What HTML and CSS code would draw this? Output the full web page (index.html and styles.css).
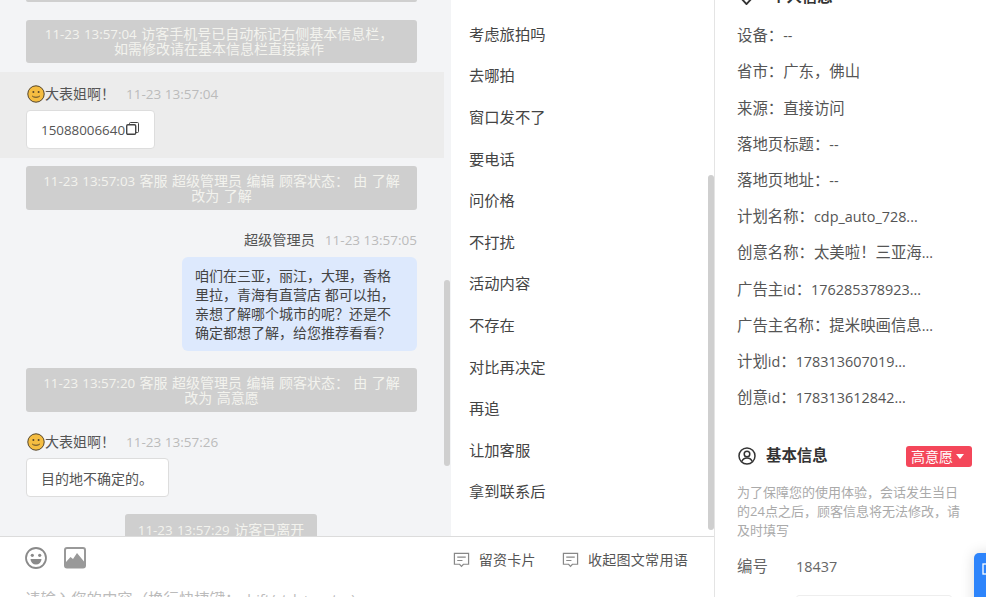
FILE: index.html
```html
<!DOCTYPE html>
<html lang="zh">
<head>
<meta charset="utf-8">
<title>会话</title>
<link rel="stylesheet" href="styles.css">
</head>
<body>
<div class="app">
  <div class="main">
    <div class="panes">
      <section class="chat">
        <div class="notice notice-clip"></div>
        <div class="notice n1"><span class="lat">11-23 13:57:04</span> 访客手机号已自动标记右侧基本信息栏，<br>如需修改请在基本信息栏直接操作</div>
        <div class="msg msg-hi">
          <div class="meta">
            <svg class="avatar" viewBox="0 0 18 18"><circle cx="9" cy="9" r="8.2" fill="#f5bd41" stroke="#55452a" stroke-width="1"/><circle cx="6.4" cy="7" r="1" fill="#55452a"/><circle cx="11.6" cy="7" r="1" fill="#55452a"/><path d="M5.2 11c1.1 1.7 6.4 1.7 7.6 0" fill="none" stroke="#55452a" stroke-width="1"/></svg>
            <span class="name">大表姐啊！</span><span class="time lat">11-23 13:57:04</span>
          </div>
          <div class="bubble phone"><span class="lat">15088006640</span><svg class="copy" viewBox="0 0 13 13"><rect x="0.7" y="2.7" width="9" height="9.6" rx="1.2" fill="none" stroke="#444" stroke-width="1.4"/><path d="M3.5 2.7V1.5a1 1 0 0 1 1-1h7a1 1 0 0 1 1 1v8a1 1 0 0 1-1 1H9.7" fill="none" stroke="#444" stroke-width="1"/></svg></div>
        </div>
        <div class="notice n2"><span class="lat">11-23 13:57:03</span> 客服 超级管理员 编辑 顾客状态： 由 了解<br>改为 了解</div>
        <div class="meta meta-right"><span class="name">超级管理员</span><span class="time lat">11-23 13:57:05</span></div>
        <div class="bubble-own">咱们在三亚，丽江，大理，香格里拉，青海有直营店 都可以拍，亲想了解哪个城市的呢？还是不确定都想了解，给您推荐看看？</div>
        <div class="notice n3"><span class="lat">11-23 13:57:20</span> 客服 超级管理员 编辑 顾客状态： 由 了解<br>改为 高意愿</div>
        <div class="meta meta-left">
          <svg class="avatar" viewBox="0 0 18 18"><circle cx="9" cy="9" r="8.2" fill="#f5bd41" stroke="#55452a" stroke-width="1"/><circle cx="6.4" cy="7" r="1" fill="#55452a"/><circle cx="11.6" cy="7" r="1" fill="#55452a"/><path d="M5.2 11c1.1 1.7 6.4 1.7 7.6 0" fill="none" stroke="#55452a" stroke-width="1"/></svg>
          <span class="name">大表姐啊！</span><span class="time lat">11-23 13:57:26</span>
        </div>
        <div class="bubble bubble-text">目的地不确定的。</div>
        <div class="notice n4"><span class="lat">11-23 13:57:29</span> 访客已离开</div>
        <div class="thumb thumb-chat"></div>
      </section>
      <section class="phrases">
        <ul class="phrase-list">
          <li>考虑旅拍吗</li>
          <li>去哪拍</li>
          <li>窗口发不了</li>
          <li>要电话</li>
          <li>问价格</li>
          <li>不打扰</li>
          <li>活动内容</li>
          <li>不存在</li>
          <li>对比再决定</li>
          <li>再追</li>
          <li>让加客服</li>
          <li>拿到联系后</li>
        </ul>
        <div class="thumb thumb-phrases"></div>
      </section>
    </div>
    <div class="composer">
      <div class="toolbar">
        <svg class="tool" viewBox="0 0 22 22"><circle cx="11" cy="11" r="10" fill="none" stroke="#8a8a8a" stroke-width="1.8"/><circle cx="7.3" cy="8.3" r="1.6" fill="#8a8a8a"/><circle cx="14.7" cy="8.3" r="1.6" fill="#8a8a8a"/><path d="M5.5 12h11a5.5 5.5 0 0 1-11 0z" fill="#8a8a8a"/></svg>
        <svg class="tool tool-img" viewBox="0 0 22 22"><rect x="1" y="1" width="20" height="19.5" rx="2" fill="#fff" stroke="#999" stroke-width="2"/><path d="M2 15l4.5-5 2.5 2 4-6 7 8.500V20H2z" fill="#999"/></svg>
        <div class="actions">
          <span class="action"><svg class="bubble-icon" viewBox="0 0 18 16"><path d="M1.5 1h15v11.5h-5.5L9 14.8 7 12.5H1.5z" fill="none" stroke="#888" stroke-width="1.3"/><path d="M4.5 5h9M4.5 8.5h5.5" stroke="#888" stroke-width="1.2"/></svg>留资卡片</span>
          <span class="action"><svg class="bubble-icon" viewBox="0 0 18 16"><path d="M1.5 1h15v11.5h-5.5L9 14.8 7 12.5H1.5z" fill="none" stroke="#888" stroke-width="1.3"/><path d="M4.5 5h9M4.5 8.5h5.5" stroke="#888" stroke-width="1.2"/></svg>收起图文常用语</span>
        </div>
      </div>
      <div class="placeholder">请输入您的内容（换行快捷键：<span class="lat">shift/ctrl + enter)</span></div>
    </div>
  </div>
  <aside class="aside">
    <h3 class="aside-title aside-title-top"><svg class="pin" viewBox="0 0 16 16"><path d="M8 15L2 8.5a4 4 0 0 1 12 0z" fill="none" stroke="#333" stroke-width="2"/></svg>个人信息</h3>
    <dl class="info">
      <div>设备：<span class="lat">--</span></div>
      <div>省市：广东，佛山</div>
      <div>来源：直接访问</div>
      <div>落地页标题：<span class="lat">--</span></div>
      <div>落地页地址：<span class="lat">--</span></div>
      <div>计划名称：<span class="lat">cdp_auto_728...</span></div>
      <div>创意名称：太美啦！三亚海<span class="lat">...</span></div>
      <div>广告主<span class="lat">id</span>：<span class="lat">176285378923...</span></div>
      <div>广告主名称：提米映画信息<span class="lat">...</span></div>
      <div>计划<span class="lat">id</span>：<span class="lat">178313607019...</span></div>
      <div>创意<span class="lat">id</span>：<span class="lat">178313612842...</span></div>
    </dl>
    <div class="basic-head">
      <svg class="user" viewBox="0 0 18 18"><circle cx="9" cy="9" r="8" fill="none" stroke="#333" stroke-width="1.5"/><circle cx="9" cy="7" r="2.8" fill="none" stroke="#333" stroke-width="1.5"/><path d="M3.8 14.5c1-2.6 3-3.5 5.2-3.5s4.2.9 5.200 3.500" fill="none" stroke="#333" stroke-width="1.5"/></svg>
      <h3 class="aside-title">基本信息</h3>
      <span class="badge">高意愿<i class="caret"></i></span>
    </div>
    <p class="hint">为了保障您的使用体验，会话发生当日的<span class="lat">24</span>点之后，顾客信息将无法修改，请及时填写</p>
    <div class="field"><span class="field-label">编号</span><span class="lat">18437</span></div>
    <div class="field-input"></div>
    <div class="float-btn"><svg viewBox="0 0 12 12" class="float-icon"><rect x="1" y="1" width="11" height="10" fill="none" stroke="#fff" stroke-width="1.3"/></svg></div>
  </aside>
</div>
</body>
</html>
```

FILE: styles.css
```css
* { box-sizing: border-box; }
html, body { margin: 0; height: 100%; overflow: hidden; background: #fff; }
body { font-family: "Open Sans", "Noto Sans CJK SC", sans-serif; font-size: 14px; color: #555; text-spacing-trim: space-all; }
.lat { font-size: .955em; }
.app { display: flex; width: 986px; height: 597px; overflow: hidden; }
.main { width: 714px; display: flex; flex-direction: column; flex: none; }
.panes { display: flex; height: 537px; border-bottom: 1px solid #dcdcdc; flex: none; }

.chat { position: relative; width: 451px; padding-right: 7px; background: #f3f4f6; overflow: hidden; flex: none; }
.notice { margin: 0 27px 0 26px; background: #cfcfcf; border-radius: 3px; color: #f3f3ee; text-align: center; font-size: 14px; line-height: 14.5px; padding: 7px 4px; word-spacing: .8px; }
.notice-clip { height: 2px; padding: 0; border-radius: 0 0 3px 3px; }
.n1 { margin-top: 18px; height: 43px; padding-right: 7px; padding-left: 2px; }
.n2 { margin-top: 8px; height: 44px; padding-top: 8px; }
.n3 { margin-top: 17px; height: 44px; padding-top: 8px; }
.n4 { margin: 17px 0 0 125px; width: 192px; height: 30px; padding-top: 8px; line-height: 16px; }

.msg-hi { margin-top: 9px; height: 86px; padding: 13px 26px 0; background: #ececec; }
.meta { display: flex; align-items: center; height: 18px; line-height: 18px; }
.meta-right { justify-content: flex-end; margin: 21px 27px 0 0; }
.meta-left { margin: 21px 0 0 26px; }
.avatar { width: 18px; height: 18px; margin-left: 1px; flex: none; }
.name { color: #555; }
.time { margin-left: 11px; color: #bbb; font-size: 13.5px; }
.meta-right .time { margin-left: 10px; }
.meta-right .name { font-size: 14.2px; }
.bubble { display: inline-flex; align-items: center; height: 39px; margin-top: 7px; padding: 0 15px 0 14px; background: #fff; border: 1px solid #ddd; border-radius: 4px; color: #555; }
.phone { width: 129px; padding-right: 0; }
.copy { width: 13px; height: 13px; margin: -3px 0 0 1px; flex: none; }
.bubble-text { display: flex; width: 143px; margin: 7px 0 0 26px; white-space: nowrap; }
.bubble-own { width: 235px; height: 94px; margin: 8px 0 0 182px; padding: 9px 13px; background: #dde9fd; border-radius: 6px; color: #444; line-height: 19px; }
.thumb { position: absolute; right: 0; width: 6px; background: #cfcfcf; border-radius: 3px; }
.thumb-chat { top: 280px; height: 186px; right: 1px; }

.phrases { position: relative; flex: 1; background: #fff; overflow: hidden; }
.phrase-list { list-style: none; margin: 0; padding: 13.8px 0 0 18px; color: #444; font-size: 15.3px; }
.phrase-list li { height: 41.6px; line-height: 41.6px; }
.thumb-phrases { top: 175px; height: 355px; }

.composer { flex: 1; position: relative; overflow: hidden; background: #fff; padding: 10px 26px 0 25px; }
.toolbar { display: flex; align-items: flex-start; }
.tool { width: 22px; height: 22px; flex: none; }
.tool-img { margin-left: 17px; }
.actions { margin-left: auto; display: flex; gap: 26px; padding-top: 3px; color: #555; line-height: 20px; }
.action { display: flex; align-items: center; letter-spacing: .3px; }
.bubble-icon { width: 17px; height: 16px; margin-right: 9px; flex: none; }
.placeholder { margin-top: 20px; color: #bbb; font-size: 15.4px; line-height: 20px; white-space: nowrap; word-spacing: 1.5px; }
.placeholder .lat { font-size: 14.4px; }

.aside { position: relative; flex: 1; border-left: 1px solid #e4e4e4; padding: 0 14px 0 22px; overflow: hidden; background: #fff; font-size: 15.4px; }
.aside .lat { font-size: 14.4px; }
.aside-title { margin: 0; font-size: 15.4px; font-weight: 700; color: #333; line-height: 20px; }
.aside-title-top { display: flex; align-items: center; margin-top: -13px; gap: 17px; height: 20px; padding-left: 2px; }
.pin { width: 15px; height: 15px; flex: none; }
.info { margin: 0; padding-top: 11.3px; color: #555; }
.info div { height: 36.2px; line-height: 36.2px; white-space: nowrap; }
.basic-head { display: flex; align-items: center; height: 22px; margin-top: 29px; }
.user { width: 18px; height: 18px; margin-left: 1px; margin-right: 10px; flex: none; }
.badge { margin-left: auto; display: flex; align-items: center; width: 66px; height: 21px; padding-left: 5px; background: #f4475a; border-radius: 3px; color: #fff; font-size: 14px; line-height: 21px; }
.caret { width: 0; height: 0; margin-left: 3px; border: 4.5px solid transparent; border-top: 5px solid #fff; border-bottom: 0; }
.hint { margin: 16px 0 0; font-size: 13px; line-height: 19px; color: #aaa; width: 233px; }
.aside .hint .lat { font-size: 13px; }
.field { display: flex; margin-top: 17px; height: 20px; line-height: 20px; color: #666; }
.field-label { width: 59px; flex: none; }
.field-input { width: 156px; height: 30px; margin: 18px 0 0 59px; border: 1px solid #eee; border-radius: 3px; }
.float-btn { position: absolute; left: 259px; top: 553px; width: 30px; height: 60px; background: #2d84fb; border-radius: 5px 0 0 5px; box-shadow: 0 0 14px rgba(0,0,0,.15); padding: 10px 0 0 8px; }
.float-icon { width: 12px; height: 12px; display: block; }
```
